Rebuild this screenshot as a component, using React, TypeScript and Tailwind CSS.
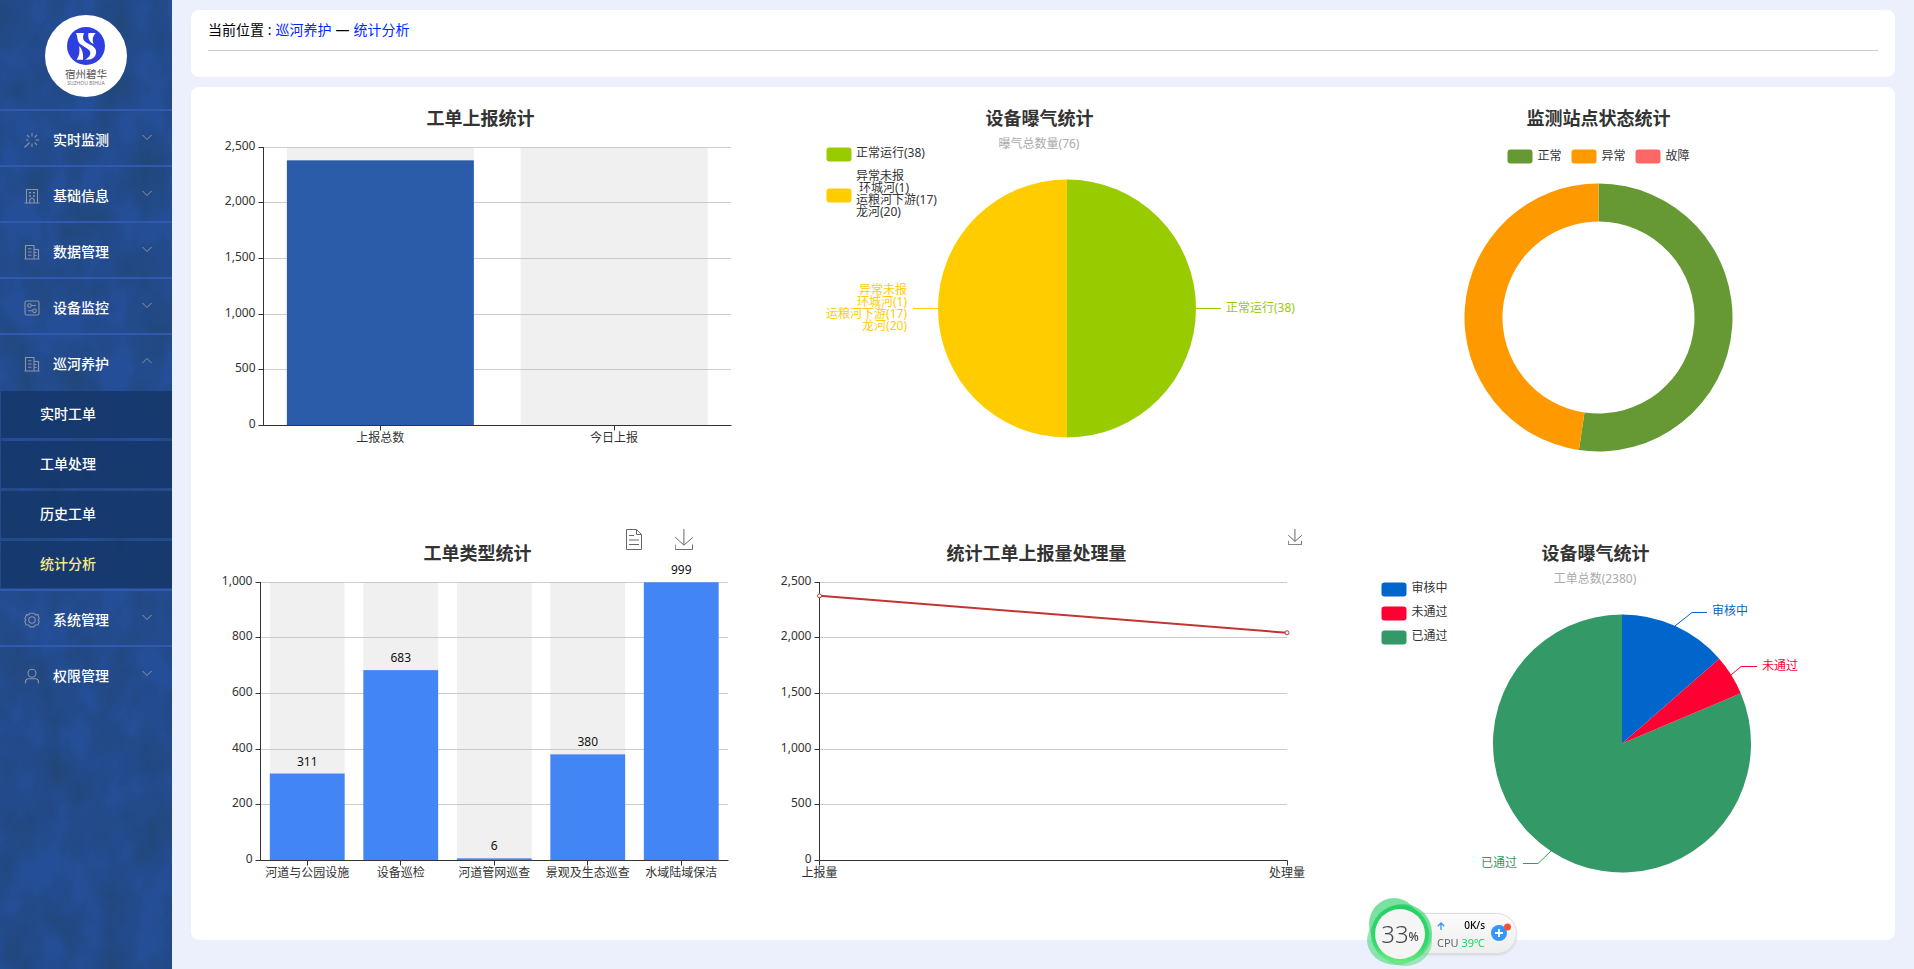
import React from "react";

type IconName = "stick" | "school" | "office" | "operation" | "setting" | "user";

const ICON_PATHS: Record<IconName, React.ReactNode> = {
  stick: (
    <>
      <path d="M.5 15.500l5-5M8 1v3.500M8 11.500V15M11.500 8H15.200M2 8h2.500M10.600 5.400l2.400-2.400M10.600 10.600l2.400 2.400M5.400 5.400L3 3" />
    </>
  ),
  school: (
    <>
      <path d="M2.500 15V1.500h11V15M.5 15h15M5.800 15v-2.500a2.200 2.200 0 0 1 4.400 0V15" />
      <path d="M5 4.800h2M9 4.800h2M5 8h2M9 8h2" strokeWidth="1.600" />
    </>
  ),
  office: (
    <>
      <path d="M1.500 15V1.500H10V15M10 5.500h4.500V15M.5 15h15M4 4.800h3.500M4 8h3.500M4 11.200h3.500M10 8.500h2.500M10 11.500h2.500" />
    </>
  ),
  operation: (
    <>
      <rect x="1" y="1" width="14" height="14" rx="1.500" />
      <circle cx="5.500" cy="5.500" r="1.800" />
      <circle cx="10.500" cy="10.800" r="1.800" />
      <path d="M7.300 5.500H12M4 10.800h4.700" />
    </>
  ),
  setting: (
    <>
      <path d="M6 1.200L4.700 2.900 2.600 2.700 1.500 4.900 .8 6.600 1.900 8 .8 9.400 2 12.700l2.600.3L6 14.900h4l1.400-1.900 2.600-.3 1.200-3.300L14.100 8l1.100-1.400L14 2.700l-2.600.2L10 1.200z" />
      <circle cx="8" cy="8" r="3.200" />
    </>
  ),
  user: (
    <>
      <circle cx="8" cy="5.200" r="4" />
      <path d="M1.500 15.500v-1.700a3 3 0 0 1 3-3h7a3 3 0 0 1 3 3v1.700" />
    </>
  ),
};

function MenuIcon({ name }: { name: IconName }) {
  return (
    <svg viewBox="0 0 16 16" className="size-4 shrink-0" fill="none" stroke="#8c93a3" strokeWidth="1.100" aria-hidden="true">
      {ICON_PATHS[name]}
    </svg>
  );
}

const MENU: { label: string; icon: IconName; children?: string[] }[] = [
  { label: "实时监测", icon: "stick" },
  { label: "基础信息", icon: "school" },
  { label: "数据管理", icon: "office" },
  { label: "设备监控", icon: "operation" },
  { label: "巡河养护", icon: "office", children: ["实时工单", "工单处理", "历史工单", "统计分析"] },
  { label: "系统管理", icon: "setting" },
  { label: "权限管理", icon: "user" },
];

function Logo() {
  return (
    <svg viewBox="0 0 82 82" className="size-[82px]" role="img" aria-label="宿州碧华">
      <circle cx="41" cy="41" r="41" fill="#fff" />
      <circle cx="41" cy="31" r="19" fill="#2f3fdf" />
      <g fill="#fff">
        <path d="M31 18H39C37 23 38 26 43 28.500C50 31.500 52.500 35 50.500 40C49 43.500 46 44.700 40 44.700C45 42 46.500 38.500 44.500 35.500C42 32.300 36 31 33.500 27C32 24 32.500 21 31 18Z" />
        <path d="M43.500 18H50.500C47.500 21.500 47 25 48.500 29C44.500 27 42.500 23 43.500 18Z" />
        <path d="M34 31C37.500 34 38.500 39 38 44.700H31.500C34.500 41 35 36 34 31Z" />
      </g>
      <text x="41" y="62.500" textAnchor="middle" fontSize="10.500" fill="#555">
        宿州碧华
      </text>
      <text x="41" y="70" textAnchor="middle" fontSize="5" fill="#777">
        SUZHOU BIHUA
      </text>
    </svg>
  );
}

function Sidebar() {
  return (
    <aside className="relative isolate w-[172px] shrink-0 bg-[#244e97]">
      <svg className="absolute inset-0 -z-10 size-full" aria-hidden="true">
        <filter id="cloth" x="0" y="0" width="100%" height="100%" colorInterpolationFilters="sRGB">
          <feTurbulence type="fractalNoise" baseFrequency="0.03 0.02" numOctaves="4" seed="4" />
          <feColorMatrix values="0 0 0 0 0.130  0 0 0 0 0.270  0 0 0 0 0.450  1.400 0 0 0 -0.400" />
        </filter>
        <rect width="100%" height="100%" filter="url(#cloth)" />
      </svg>
      <div className="flex h-[109px] justify-center pt-[15px]">
        <Logo />
      </div>
      <nav>
        <ul>
          {MENU.map((item) => (
            <li key={item.label}>
              <button
                type="button"
                aria-expanded={Boolean(item.children)}
                className="flex h-14 w-full cursor-pointer items-center border-t-2 border-[#305aae] pt-1 pr-5 pl-6 text-sm font-medium text-white"
              >
                <MenuIcon name={item.icon} />
                <span className="ml-[13px] flex-1 text-left">{item.label}</span>
                <svg
                  viewBox="0 0 10 10"
                  className="mb-1.5 size-2.5"
                  fill="none"
                  stroke="#8c93a3"
                  strokeWidth="1"
                  aria-hidden="true"
                >
                  <path d={item.children ? "M.5 7L5 2.500 9.500 7" : "M.5 3L5 7.500 9.500 3"} />
                </svg>
              </button>
              {item.children && (
                <ul>
                  {item.children.map((child) => (
                    <li key={child} className="pt-0.5 pb-px pl-px">
                      <a
                        href="#"
                        className={
                          child === "统计分析"
                            ? "flex h-[47px] items-center bg-[#15376c]/90 pb-0.5 pl-[39px] text-sm font-medium text-[#f5e98a]"
                            : "flex h-[47px] items-center bg-[#15376c]/90 pb-0.5 pl-[39px] text-sm font-medium text-white"
                        }
                      >
                        {child}
                      </a>
                    </li>
                  ))}
                </ul>
              )}
            </li>
          ))}
        </ul>
      </nav>
    </aside>
  );
}

function Panel({ title, tools, children }: { title: string; tools?: React.ReactNode; children: React.ReactNode }) {
  return (
    <section className="relative min-w-0 pt-4">
      <h2 className="text-center text-lg leading-[26px] font-bold text-[#333]">{title}</h2>
      <svg
        viewBox="0 0 559 366"
        className="h-[366px] w-full overflow-visible"
        fontSize="12"
        fill="#333"
        role="img"
        aria-label={title}
      >
        {children}
      </svg>
      {tools}
    </section>
  );
}

const AXIS_LEFT = 62.5;
const AXIS_RIGHT = 530;
const AXIS_TOP = 16.5;
const AXIS_BOTTOM = 294.5;
const AXIS_HEIGHT = AXIS_BOTTOM - AXIS_TOP;

const crisp = (value: number) => Math.floor(value) + 0.5;

function Axes({ max, step, ticks }: { max: number; step: number; ticks: number[] }) {
  const values = Array.from({ length: max / step + 1 }, (_, i) => i * step);
  return (
    <>
      {values.map((v) => {
        const y = crisp(AXIS_BOTTOM - 0.2 - (v / max) * AXIS_HEIGHT);
        return (
          <g key={v}>
            {v > 0 && <path d={`M${AXIS_LEFT} ${y}H${AXIS_RIGHT}`} stroke="#ccc" />}
            <path d={`M${AXIS_LEFT - 5} ${y}h5`} stroke="#333" />
            <text x={AXIS_LEFT - 8} y={y + 2.5} textAnchor="end">
              {v.toLocaleString("en-US")}
            </text>
          </g>
        );
      })}
      <path d={`M${AXIS_LEFT} ${AXIS_TOP - 0.5}V${AXIS_BOTTOM}H${AXIS_RIGHT + 0.5}`} stroke="#333" fill="none" />
      {ticks.map((x) => (
        <path key={x} d={`M${crisp(x)} ${AXIS_BOTTOM}v5`} stroke="#333" />
      ))}
    </>
  );
}

function BarChart({
  data,
  max,
  step,
  color,
  showValues,
}: {
  data: { name: string; value: number }[];
  max: number;
  step: number;
  color: string;
  showValues?: boolean;
}) {
  const band = (AXIS_RIGHT - AXIS_LEFT) / data.length;
  const center = (i: number) => AXIS_LEFT + band * (i + 0.5);
  return (
    <>
      <Axes max={max} step={step} ticks={data.map((_, i) => center(i))} />
      {data.map((d, i) => {
        const x = AXIS_LEFT + band * (i + 0.1);
        const h = (d.value / max) * AXIS_HEIGHT;
        return (
          <g key={d.name}>
            <rect x={x} y={AXIS_TOP} width={band * 0.8} height={AXIS_HEIGHT - 0.5} fill="#b4b4b4" fillOpacity="0.2" />
            <rect x={x} y={AXIS_BOTTOM - 0.5 - h} width={band * 0.8} height={h} fill={color} />
            {showValues && (
              <text x={center(i)} y={AXIS_BOTTOM - h - 8.5} textAnchor="middle" fill="#111">
                {d.value}
              </text>
            )}
            <text x={center(i)} y={311} textAnchor="middle">
              {d.name}
            </text>
          </g>
        );
      })}
      <path d={`M${AXIS_LEFT} ${AXIS_BOTTOM}H${AXIS_RIGHT}`} stroke="#333" />
    </>
  );
}

function LineChart({ data, max, step }: { data: { name: string; value: number }[]; max: number; step: number }) {
  const points = data.map((d, i) => ({
    ...d,
    x: AXIS_LEFT + ((AXIS_RIGHT - AXIS_LEFT) * i) / (data.length - 1),
    y: AXIS_BOTTOM - (d.value / max) * AXIS_HEIGHT,
  }));
  return (
    <>
      <Axes max={max} step={step} ticks={points.map((p) => p.x)} />
      <polyline points={points.map((p) => `${p.x},${p.y}`).join(" ")} fill="none" stroke="#c23531" strokeWidth="2" />
      {points.map((p) => (
        <g key={p.name}>
          <circle cx={p.x} cy={p.y} r="2" fill="#fff" stroke="#c23531" />
          <text x={p.x} y={311} textAnchor="middle">
            {p.name}
          </text>
        </g>
      ))}
    </>
  );
}

function slicePath(cx: number, cy: number, r: number, from: number, to: number, inner = 0) {
  const at = (radius: number, deg: number) => {
    const a = (deg * Math.PI) / 180;
    return `${cx + radius * Math.sin(a)} ${cy - radius * Math.cos(a)}`;
  };
  const large = to - from > 180 ? 1 : 0;
  const back = inner ? `L${at(inner, to)}A${inner} ${inner} 0 ${large} 0 ${at(inner, from)}` : `L${cx} ${cy}`;
  return `M${at(r, from)}A${r} ${r} 0 ${large} 1 ${at(r, to)}${back}Z`;
}

function Lines({
  x,
  y,
  lines,
  anchor = "start",
  fill,
}: {
  x: number;
  y: number;
  lines: string[];
  anchor?: "start" | "end" | "middle";
  fill?: string;
}) {
  return (
    <text textAnchor={anchor} fill={fill}>
      {lines.map((line, i) => (
        <tspan key={line} x={x} y={y + i * 12}>
          {line}
        </tspan>
      ))}
    </text>
  );
}

function Swatch({ x, y, color }: { x: number; y: number; color: string }) {
  return <rect x={x} y={y} width="25" height="14" rx="3" fill={color} />;
}

const DOWNLOAD = "M4.700 22.900L29.300 45.500 54.700 23.400M4.600 43.600L4.600 58 53.800 58 53.800 43.600M29.200 45.100L29.200 0";

function DownloadButton({ className }: { className: string }) {
  return (
    <button type="button" aria-label="保存为图片" className="cursor-pointer">
      <svg viewBox="4 0 51 59" className={className} fill="none" stroke="#666" strokeWidth="1">
        <path d={DOWNLOAD} vectorEffect="non-scaling-stroke" />
      </svg>
    </button>
  );
}

function MonitorWidget() {
  return (
    <div className="fixed right-[397px] bottom-[3px] flex h-[68px] w-[150px] items-center">
      <div className="absolute top-[15px] right-0 h-[41px] w-[122px] rounded-r-full border border-[#dcdcdc] bg-linear-to-b from-[#fbfbfb] to-[#eee] shadow" />
      <div className="relative size-[68px] shrink-0">
        <svg viewBox="0 0 68 68" className="absolute inset-0 size-full" aria-hidden="true">
          <defs>
            <linearGradient id="ring" x1="0" y1="0" x2="0" y2="1">
              <stop offset="0" stopColor="#22cf62" />
              <stop offset="0.700" stopColor="#2fd868" />
              <stop offset="1" stopColor="#6bf07a" />
            </linearGradient>
          </defs>
          <ellipse cx="27" cy="26" rx="25" ry="26" fill="#22cf62" fillOpacity="0.600" />
          <ellipse cx="36" cy="35" rx="29" ry="29" fill="#22cf62" fillOpacity="0.600" />
          <ellipse cx="29" cy="42" rx="29" ry="25" fill="#4ad97a" fillOpacity="0.600" />
          <ellipse cx="38" cy="43" rx="27" ry="25" fill="#4ad97a" fillOpacity="0.500" />
          <circle cx="33" cy="36" r="29" fill="url(#ring)" fillOpacity="0.900" />
          <circle cx="33" cy="36" r="25" fill="#f5f5f5" />
        </svg>
        <div className="relative flex h-[72px] w-[66px] items-center justify-center text-[#444]">
          <span className="text-2xl font-light">33</span>
          <span className="mt-1.5 text-xs font-medium">%</span>
        </div>
      </div>
      <div className="relative ml-0.5 grid w-12 grid-cols-[auto_auto] gap-y-1 pt-1 text-[11px] leading-[14px]">
        <svg viewBox="0 0 8 8" className="mt-1 size-2" fill="none" stroke="#3296fa" strokeWidth="1.300" aria-hidden="true">
          <path d="M4 8V1M.8 4.200L4 1l3.200 3.200" />
        </svg>
        <span className="text-right text-[10px] font-medium text-black">0K/s</span>
        <span className="text-[#666]">CPU</span>
        <span className="text-right whitespace-nowrap text-[#1fd264]">39℃</span>
      </div>
      <button type="button" aria-label="加速" className="relative ml-1.5 cursor-pointer">
        <svg viewBox="0 0 20 18" className="h-[18px] w-5">
          <circle cx="8" cy="10" r="8" fill="#3296fa" />
          <path d="M8 6v8M4 10h8" stroke="#fff" strokeWidth="2" />
          <circle cx="16.500" cy="4" r="3.500" fill="#f4512c" />
        </svg>
      </button>
    </div>
  );
}

const LEGEND_DONUT = [
  { name: "正常", color: "#669933" },
  { name: "异常", color: "#ff9900" },
  { name: "故障", color: "#ff6666" },
];

const LEGEND_REVIEW = [
  { name: "审核中", color: "#0066cc" },
  { name: "未通过", color: "#ff0033" },
  { name: "已通过", color: "#339966" },
];

export default function App() {
  return (
    <div className="flex min-h-screen bg-[#ebf0fc] font-['Noto_Sans','Noto_Sans_CJK_SC',sans-serif] text-black">
      <Sidebar />
      <main className="min-w-0 flex-1 px-[19px] pt-2.5 pb-[29px]">
        <header className="h-[67px] rounded-lg bg-white px-[17px] pt-2.5">
          <p className="flex gap-1 text-sm leading-[20px]">
            <span>当前位置 :</span>
            <a href="#" className="text-[#0026ff]">
              巡河养护
            </a>
            <span>—</span>
            <a href="#" className="text-[#0026ff]">
              统计分析
            </a>
          </p>
          <hr className="mt-2.5 border-[#ccc]" />
        </header>

        <div className="mt-2.5 flex flex-col gap-[27px] rounded-lg bg-white pt-0.5 pb-2">
          <div className="grid grid-cols-3 pr-[17px] pl-2.5">
            <Panel title="工单上报统计">
              <BarChart
                data={[
                  { name: "上报总数", value: 2380 },
                  { name: "今日上报", value: 0 },
                ]}
                max={2500}
                step={500}
                color="#2a5caa"
              />
            </Panel>

            <Panel title="设备曝气统计">
              <text x="279" y="17" textAnchor="middle" fill="#aaa">
                曝气总数量(76)
              </text>
              <Swatch x={66.5} y={16.5} color="#99cc00" />
              <Lines x={96} y={26} lines={["正常运行(38)"]} />
              <Swatch x={66.5} y={57.5} color="#ffcc00" />
              <Lines x={96} y={49} lines={["异常未报"]} />
              <Lines x={99} y={61} lines={["环城河(1)"]} />
              <Lines x={96} y={73} lines={["运粮河下游(17)", "龙河(20)"]} />
              <path d={slicePath(307, 177.5, 129, 0, 180)} fill="#99cc00" />
              <path d={slicePath(307, 177.5, 129, 180, 360)} fill="#ffcc00" />
              <path d="M436 177.500h25" stroke="#99cc00" />
              <Lines x={466} y={181} lines={["正常运行(38)"]} fill="#99cc00" />
              <path d="M153 177.500h25" stroke="#ffcc00" />
              <Lines
                x={147}
                y={163}
                anchor="end"
                fill="#ffcc00"
                lines={["异常未报", "环城河(1)", "运粮河下游(17)", "龙河(20)"]}
              />
            </Panel>

            <Panel title="监测站点状态统计">
              {LEGEND_DONUT.map((item, i) => (
                <g key={item.name}>
                  <Swatch x={188.5 + i * 64} y={18.5} color={item.color} />
                  <Lines x={218.5 + i * 64} y={29} lines={[item.name]} />
                </g>
              ))}
              <path d={slicePath(279.5, 186.5, 134, 0, 188.4, 96)} fill="#669933" />
              <path d={slicePath(279.5, 186.5, 134, 188.4, 360, 96)} fill="#ff9900" />
            </Panel>
          </div>

          <div className="grid grid-cols-3 pr-5 pl-[7px]">
            <Panel
              title="工单类型统计"
              tools={
                <div className="absolute top-[5px] right-16 flex gap-[33px]">
                  <button type="button" aria-label="数据视图" className="cursor-pointer">
                    <svg viewBox="0 0 16 21" className="h-[21px] w-4" fill="none" stroke="#666">
                      <path d="M.5.500H10.500L15.500 5.500V20.500H.5zM10.500.500V5.500H15.500M3 6.500H8M3 11H13M3 15.500H13" />
                    </svg>
                  </button>
                  <DownloadButton className="h-[21px] w-[18px]" />
                </div>
              }
            >
              <BarChart
                data={[
                  { name: "河道与公园设施", value: 311 },
                  { name: "设备巡检", value: 683 },
                  { name: "河道管网巡查", value: 6 },
                  { name: "景观及生态巡查", value: 380 },
                  { name: "水域陆域保洁", value: 999 },
                ]}
                max={1000}
                step={200}
                color="#4286f5"
                showValues
              />
            </Panel>

            <Panel
              title="统计工单上报量处理量"
              tools={
                <div className="absolute top-[5px] right-3.5 flex">
                  <DownloadButton className="h-4 w-3.5" />
                </div>
              }
            >
              <LineChart
                data={[
                  { name: "上报量", value: 2380 },
                  { name: "处理量", value: 2048 },
                ]}
                max={2500}
                step={500}
              />
            </Panel>

            <Panel title="设备曝气统计">
              <text x="279" y="17" textAnchor="middle" fill="#aaa">
                工单总数(2380)
              </text>
              {LEGEND_REVIEW.map((item, i) => (
                <g key={item.name}>
                  <Swatch x={65.5} y={16.5 + i * 24} color={item.color} />
                  <Lines x={95.5} y={26 + i * 24} lines={[item.name]} />
                </g>
              ))}
              <path d={slicePath(306, 177.5, 129, 67.1, 360)} fill="#339966" />
              <path d={slicePath(306, 177.5, 129, 48.9, 67.1)} fill="#ff0033" />
              <path d={slicePath(306, 177.5, 129, 0, 48.9)} fill="#0066cc" />
              <path d="M359 60L376 46.500H391" stroke="#0066cc" fill="none" />
              <Lines x={396} y={49} lines={["审核中"]} fill="#0066cc" />
              <path d="M415 109L425 100.500H441" stroke="#ff0033" fill="none" />
              <Lines x={446} y={104} lines={["未通过"]} fill="#ff0033" />
              <path d="M235 285L222 297.500H207" stroke="#339966" fill="none" />
              <Lines x={201} y={301} anchor="end" lines={["已通过"]} fill="#339966" />
            </Panel>
          </div>
        </div>
      </main>
      <MonitorWidget />
    </div>
  );
}
